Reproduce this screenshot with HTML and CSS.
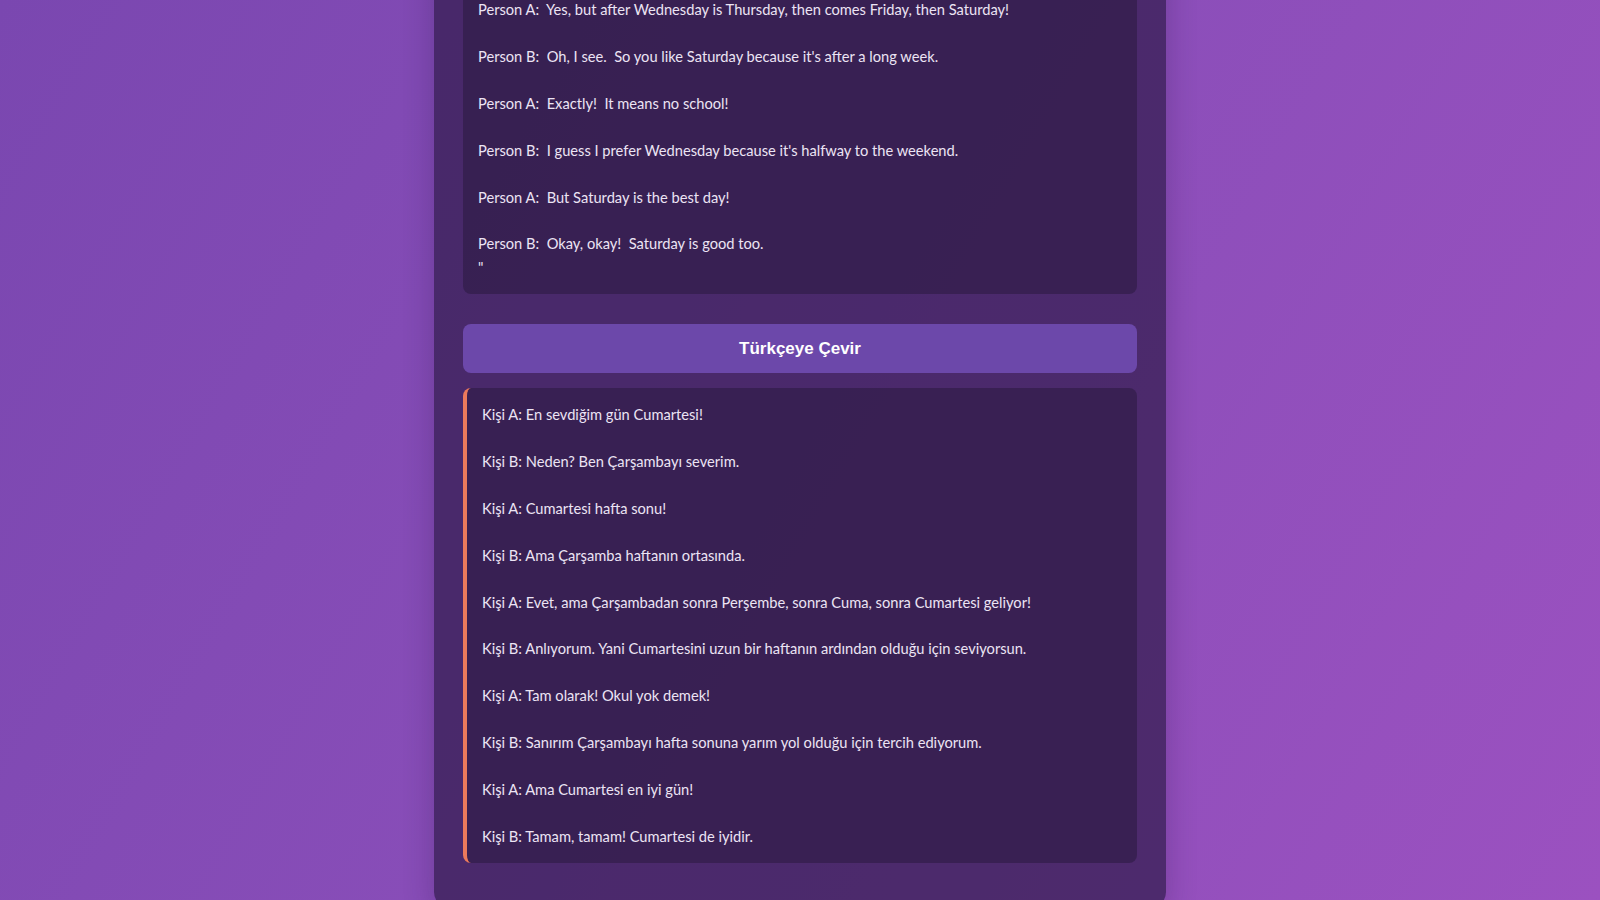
FILE: index.html
```html
<!DOCTYPE html>
<html lang="tr">
<head>
<meta charset="utf-8">
<title>Dialogue Translator</title>
<link rel="stylesheet" href="styles.css">
</head>
<body>
<main class="card">
  <h1 class="title">Günler Hakkında Diyalog</h1>
  <div class="dialogue">"Person A:  My favorite day is Saturday!

Person B:  Why?  I like Wednesday.

Person A:  Saturday is the weekend!

Person B:  But Wednesday is in the middle of the week.

Person A:  Yes, but after Wednesday is Thursday, then comes Friday, then Saturday!

Person B:  Oh, I see.  So you like Saturday because it's after a long week.

Person A:  Exactly!  It means no school!

Person B:  I guess I prefer Wednesday because it's halfway to the weekend.

Person A:  But Saturday is the best day!

Person B:  Okay, okay!  Saturday is good too.
"</div>
  <button class="translate-btn" type="button">Türkçeye Çevir</button>
  <div class="dialogue translation">Kişi A: En sevdiğim gün Cumartesi!

Kişi B: Neden? Ben Çarşambayı severim.

Kişi A: Cumartesi hafta sonu!

Kişi B: Ama Çarşamba haftanın ortasında.

Kişi A: Evet, ama Çarşambadan sonra Perşembe, sonra Cuma, sonra Cumartesi geliyor!

Kişi B: Anlıyorum. Yani Cumartesini uzun bir haftanın ardından olduğu için seviyorsun.

Kişi A: Tam olarak! Okul yok demek!

Kişi B: Sanırım Çarşambayı hafta sonuna yarım yol olduğu için tercih ediyorum.

Kişi A: Ama Cumartesi en iyi gün!

Kişi B: Tamam, tamam! Cumartesi de iyidir.</div>
</main>
</body>
</html>
```
FILE: styles.css
```css
html, body {
  margin: 0;
  height: 100%;
}

body {
  background: linear-gradient(120deg, #7a47b0 0%, #8a4eb9 50%, #9b51c0 100%);
  display: flex;
  flex-direction: column;
  justify-content: flex-end;
  align-items: center;
  overflow: hidden;
  font-family: Lato, "Noto Sans", sans-serif;
  color: #ece4f4;
}

.card {
  flex-shrink: 0;
  width: 732px;
  box-sizing: border-box;
  padding: 29px 29px 45px;
  margin-bottom: -8px;
  background: rgba(50, 28, 78, 0.72);
  border-radius: 16px;
  box-shadow: 0 8px 30px rgba(30, 10, 60, 0.25);
  display: flex;
  flex-direction: column;
}

.title {
  margin: 0 0 24px;
  font-family: "Liberation Sans", Arial, sans-serif;
  font-size: 26px;
  text-align: center;
}

.dialogue {
  white-space: pre-wrap;
  background: rgba(45, 27, 66, 0.6);
  border-radius: 8px;
  padding: 15px;
  font-size: 14.67px;
  line-height: 23.4px;
}

.translate-btn {
  margin: 30px 0 15px;
  height: 49px;
  border: none;
  border-radius: 8px;
  background: #6c48aa;
  color: #ffffff;
  font-family: "Liberation Sans", Arial, sans-serif;
  font-weight: bold;
  font-size: 17px;
  cursor: pointer;
}

.translation {
  border-left: 4px solid #ec7a5c;
}
```
